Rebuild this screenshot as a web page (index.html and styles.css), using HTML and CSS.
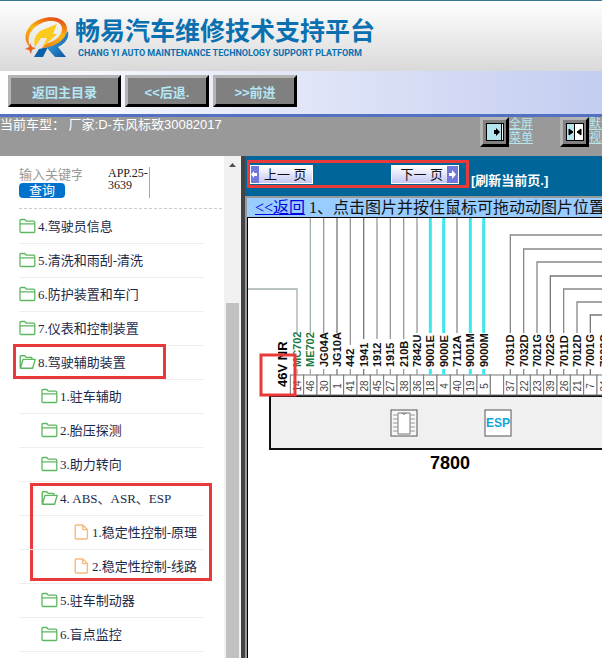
FILE: index.html
```html
<!DOCTYPE html>
<html lang="zh-CN">
<head>
  <meta charset="UTF-8">
  <meta name="viewport" content="width=device-width, initial-scale=1.0">
  <title>畅易汽车维修技术支持平台</title>
  <link rel="stylesheet" href="styles.css">
</head>
<body>
  <!-- icons used in the tree -->
  <svg class="sprites" width="0" height="0">
    <symbol id="folder" viewBox="0 0 17 16">
      <path d="M1 13.5V2.8Q1 1.5 2.3 1.5H5.8L7.2 3.2H14.5Q15.8 3.2 15.8 4.5V13.5Q15.8 14.5 14.8 14.5H2Q1 14.5 1 13.5ZM1 5.8H15.8" fill="none" stroke="#5cb860" stroke-width="1.3"/>
    </symbol>
    <symbol id="folder-open" viewBox="0 0 17 16">
      <path d="M1.2 13.8V2.8Q1.2 1.8 2.2 1.8H5.8L7.2 3.4H12.8V5.4M1.4 14.2L4 5.4H16.2L13.6 14.2Z" fill="none" stroke="#5cb860" stroke-width="1.4" stroke-linejoin="round"/>
    </symbol>
    <symbol id="file" viewBox="0 0 15 16">
      <path d="M1.2 2Q1.2 1 2.2 1H8.8L13.4 5.6V14Q13.4 15 12.4 15H2.2Q1.2 15 1.2 14ZM8.8 1V5.6H13.4" fill="none" stroke="#f5ba7c" stroke-width="1.4" stroke-linejoin="round"/>
    </symbol>
  </svg>

  <header class="banner">
    <svg class="logo" width="48" height="44" viewBox="0 0 48 44">
      <defs>
        <linearGradient id="flame" x1="0.7" y1="0" x2="0.3" y2="1">
          <stop offset="0" stop-color="#e44a12"/>
          <stop offset="0.45" stop-color="#fbb615"/>
          <stop offset="1" stop-color="#ef7a12"/>
        </linearGradient>
        <linearGradient id="leg" x1="0" y1="0" x2="1" y2="1">
          <stop offset="0" stop-color="#45b5e8"/>
          <stop offset="1" stop-color="#0b4f9e"/>
        </linearGradient>
      </defs>
      <path d="M16 33L25 31L20 41H11Z" fill="#0c5fa9"/>
      <path d="M25 30Q34 29 45 15Q47 25 35 31L43 41H32L24 32Z" fill="url(#leg)"/>
      <path d="M7 31C-2 23 3 8 18 3C32 -2 45 4 44 14C43 24 32 31 19 32L22 28C31 26 39 20 39 13C39 5 28 3 19 7C7 12 3 22 7 31Z" fill="url(#flame)"/>
      <path d="M17 15L34 8L30 18H34L19 32L24 22H18L12 31Q9 22 17 15Z" fill="#fcc91d"/>
      <path d="M7 27L9 31L13 32L9 34L8 38L6 34L2 33L6 31Z" fill="#e8641c"/>
    </svg>
    <div class="brand">
      <h1>畅易汽车维修技术支持平台</h1>
      <p>CHANG YI AUTO MAINTENANCE TECHNOLOGY SUPPORT PLATFORM</p>
    </div>
  </header>

  <nav class="toolbar">
    <button type="button" class="bevel wide">返回主目录</button>
    <button type="button" class="bevel">&lt;&lt;后退.</button>
    <button type="button" class="bevel">&gt;&gt;前进</button>
  </nav>

  <div class="status">
    <p class="model">当前车型： 厂家:D-东风标致30082017</p>
    <div class="view">
      <button type="button" class="bevel icon" aria-label="全屏菜单">
        <svg width="18" height="18" viewBox="0 0 18 18">
          <rect width="18" height="18" fill="#000"/>
          <rect x="1" y="1" width="14" height="16" fill="#b5e6ee"/>
          <rect x="16" y="1" width="1" height="16" fill="#fff"/>
          <path d="M8 7H10V5L14 9L10 13V11H8Z" fill="#000"/>
        </svg>
      </button>
      <a href="#">全屏<br>菜单</a>
    </div>
    <div class="view">
      <button type="button" class="bevel icon" aria-label="默认视图">
        <svg width="18" height="18" viewBox="0 0 18 18">
          <rect width="18" height="18" fill="#000"/>
          <rect x="1" y="1" width="7" height="16" fill="#b5e6ee"/>
          <rect x="9" y="1" width="8" height="16" fill="#fff"/>
          <path d="M3 6L7 9L3 12ZM15 6L11 9L15 12Z" fill="#000" stroke="#000"/>
        </svg>
      </button>
      <a href="#">默认<br>视图</a>
    </div>
  </div>

  <main class="main">
    <aside class="sidebar">
      <form class="search">
        <div class="fields">
          <input type="text" name="keyword" placeholder="输入关键字" aria-label="输入关键字">
          <button type="submit">查询</button>
        </div>
        <p class="code">APP.25-3639</p>
      </form>
      <ul class="tree">
        <li><a href="#"><svg><use href="#folder"/></svg>4.驾驶员信息</a></li>
        <li><a href="#"><svg><use href="#folder"/></svg>5.清洗和雨刮-清洗</a></li>
        <li><a href="#"><svg><use href="#folder"/></svg>6.防护装置和车门</a></li>
        <li><a href="#"><svg><use href="#folder"/></svg>7.仪表和控制装置</a></li>
        <li><a href="#"><svg><use href="#folder-open"/></svg>8.驾驶辅助装置</a>
          <span class="mark mark-row"></span>
          <ul class="level2">
            <li><a href="#"><svg><use href="#folder"/></svg>1.驻车辅助</a></li>
            <li><a href="#"><svg><use href="#folder"/></svg>2.胎压探测</a></li>
            <li><a href="#"><svg><use href="#folder"/></svg>3.助力转向</a></li>
            <li><a href="#"><svg><use href="#folder-open"/></svg>4. ABS、ASR、ESP</a>
              <span class="mark mark-group"></span>
              <ul class="level3">
                <li><a href="#"><svg><use href="#file"/></svg>1.稳定性控制-原理</a></li>
                <li><a href="#"><svg><use href="#file"/></svg>2.稳定性控制-线路</a></li>
              </ul>
            </li>
            <li><a href="#"><svg><use href="#folder"/></svg>5.驻车制动器</a></li>
            <li><a href="#"><svg><use href="#folder"/></svg>6.盲点监控</a></li>
          </ul>
        </li>
      </ul>
    </aside>
    <div class="scrollbar">
      <svg width="17" height="17" viewBox="0 0 17 17"><path d="M5 11L8.5 7L12 11Z" fill="#505050"/></svg>
      <div class="thumb"></div>
    </div>

    <section class="content">
      <div class="pages">
        <div class="pager">
          <button type="button" class="prev">
            <svg width="8" height="17" viewBox="0 0 8 17"><rect width="8" height="17" fill="#7078dc"/><path d="M0 8.5L3 5V7H6V10H3V12Z" fill="#fff"/></svg>
            <span>上一 页</span>
          </button>
          <button type="button" class="next">
            <span>下一 页</span>
            <svg width="11" height="17" viewBox="0 0 11 17"><rect width="11" height="17" fill="#7078dc"/><path d="M9 8.5L5 4V7H2V10H5V13Z" fill="#fff"/></svg>
          </button>
        </div>
        <a class="refresh" href="#">[刷新当前页.]</a>
      </div>
      <div class="viewer">
        <p class="hint"><a href="#">&lt;&lt;返回</a> 1、点击图片并按住鼠标可拖动动图片位置</p>
        <div class="canvas">
          <svg id="diagram" width="480" height="300" viewBox="0 0 480 300">
            <rect x="22" y="178" width="500" height="53" fill="#f0f0f0" stroke="#111" stroke-width="2"/>
            <g id="pins"></g>
            <text class="ground" transform="translate(39 169) rotate(-90)">46V NR</text>
            <g fill="none" stroke="#555">
              <rect x="143" y="192" width="26" height="26" fill="#f7f7f7"/>
              <path d="M150 195H162V216H150ZM154 195Q156 198 158 195" fill="#fff" stroke="#777"/>
              <path d="M145 197H150M145 201H150M145 205H150M145 209H150M145 213H150M162 197H167M162 201H167M162 205H167M162 209H167M162 213H167" stroke="#999"/>
              <rect x="237" y="192" width="26" height="26" fill="#fff"/>
            </g>
            <text class="esp" x="250" y="209">ESP</text>
            <text class="unit" x="202" y="251">7800</text>
            <rect x="13" y="137" width="34" height="40" fill="none" stroke="#e93a3a" stroke-width="3"/>
          </svg>
        </div>
      </div>
    </section>
  </main>

  <script src="script.js"></script>
</body>
</html>
```

FILE: styles.css
```css
* {
  box-sizing: border-box;
}
body {
  margin: 0;
  height: 100vh;
  overflow: hidden;
  display: flex;
  flex-direction: column;
  font-family: "Liberation Sans", "Noto Sans CJK SC", sans-serif;
  font-size: 13px;
  background-color: #fff;
}
h1, p, ul {
  margin: 0;
  padding: 0;
}
svg {
  flex: none;
  display: block;
}
button {
  font-family: inherit;
  cursor: pointer;
}
.sprites {
  position: absolute;
}

/* header */
.banner {
  flex: none;
  display: flex;
  gap: 4px;
  height: 71px;
  padding: 15px 23px 0;
  border-top: 1px solid #3c7795;
  background: linear-gradient(#fff, #d9d9d9);
}
.brand {
  color: #0a70b0;
  white-space: nowrap;
}
.brand h1 {
  font-size: 25px;
  line-height: 30px;
}
.brand p {
  padding-left: 3px;
  font-family: Roboto, "Liberation Sans", sans-serif;
  font-size: 9px;
  line-height: 14px;
  font-weight: bold;
}
.toolbar {
  flex: none;
  display: flex;
  gap: 4px;
  height: 46px;
  padding: 4px 8px;
  border-bottom: 3px solid #5470c0;
  background: linear-gradient(90deg, #fff, #c3cdf0);
}
.bevel {
  width: 84px;
  height: 32px;
  padding: 0;
  border: 3px solid;
  border-color: #b4b4b4 #000 #000 #b4b4b4;
  background-color: #808080;
  color: #b4e6f5;
  font-size: 13px;
  font-weight: bold;
}
.bevel.wide {
  width: 113px;
}
.bevel.icon {
  width: 29px;
  height: 30px;
  display: flex;
  align-items: center;
  justify-content: center;
}
.status {
  flex: none;
  display: flex;
  height: 39px;
  overflow: hidden;
  background-color: #999;
  color: #fff;
}
.model {
  flex: 0 0 480px;
  line-height: 16px;
}
.view {
  flex: 0 0 80px;
  display: flex;
}
.view a {
  color: #b5e6ee;
  font-size: 12px;
  line-height: 14px;
  white-space: nowrap;
}

/* left tree */
.main {
  flex: 1;
  min-height: 0;
  display: flex;
}
.sidebar {
  flex: 0 0 224px;
  padding-left: 19px;
  font-family: "Liberation Serif", "Noto Sans CJK SC", serif;
}
.search {
  display: flex;
  height: 53px;
  margin-right: 2px;
  padding-top: 11px;
  border-bottom: 1px dashed #ccc;
}
.fields {
  width: 89px;
}
.search input {
  display: block;
  width: 63px;
  height: 16px;
  padding: 0;
  border: 0;
  background: none;
  font-family: inherit;
  font-size: 13px;
}
.search input::placeholder {
  color: #999;
}
.search button {
  display: block;
  width: 46px;
  height: 15px;
  padding: 0;
  border: 0;
  border-radius: 4px;
  background-color: #0072cc;
  color: #fff;
  font-size: 13px;
  line-height: 15px;
}
.code {
  width: 42px;
  height: 31px;
  border-right: 1px solid #aaa;
  color: #222;
  font-size: 12px;
  line-height: 12px;
}
.tree {
  margin-right: 20px;
  padding-top: 1px;
}
.tree li {
  position: relative;
  list-style: none;
}
.tree a {
  display: flex;
  align-items: center;
  gap: 2px;
  height: 34px;
  padding-bottom: 2px;
  border-bottom: 1px solid #eee;
  color: #1c2a4a;
  text-decoration: none;
  white-space: nowrap;
}
.tree svg {
  width: 17px;
  height: 16px;
}
.level2 a {
  padding-left: 22px;
}
.level3 a {
  padding-left: 54px;
}
.mark {
  position: absolute;
  border: 3px solid #e93a3a;
}
.mark-row {
  top: -2px;
  left: -6px;
  width: 153px;
  height: 35px;
}
.mark-group {
  top: 1px;
  left: 11px;
  right: -8px;
  bottom: 3px;
}
.scrollbar {
  flex: 0 0 21px;
  display: flex;
  flex-direction: column;
  border-right: 4px solid #444;
  background-color: #f1f1f1;
}
.thumb {
  flex: 1;
  margin: 130px 2px 0;
  background-color: #c1c1c1;
}

/* right pane */
.content {
  flex: 1;
  min-width: 0;
  display: flex;
  flex-direction: column;
  background-color: #069;
}
.pages {
  flex: none;
  display: flex;
  gap: 2px;
  height: 40px;
  padding: 4px 2px;
}
.pager {
  flex: 0 0 222px;
  display: flex;
  align-items: center;
  justify-content: space-between;
  height: 28px;
  padding-right: 7px;
  border: 3px solid #e93a3a;
}
.pager button {
  display: flex;
  align-items: center;
  height: 19px;
  padding: 0;
  border: 1px solid #fff;
  background: linear-gradient(#fff, #c4c8f4);
  color: #111;
  font-size: 13px;
  line-height: 17px;
  white-space: nowrap;
}
.pager span {
  padding: 0 5px;
}
.pager .next span {
  padding: 0 4px 0 8px;
}
.refresh {
  padding-top: 12px;
  color: #fff;
  font-weight: bold;
  line-height: 18px;
  text-decoration: none;
  white-space: nowrap;
}
.viewer {
  flex: 1;
  min-height: 0;
  display: flex;
  flex-direction: column;
  border-top: 2px solid #999;
  border-left: 2px solid #999;
}
.hint {
  flex: none;
  height: 19px;
  overflow: hidden;
  padding-left: 8px;
  background-color: #9cf;
  color: #111;
  font-family: "Liberation Serif", "Noto Sans CJK SC", serif;
  font-size: 16px;
  line-height: 19px;
  white-space: nowrap;
}
.hint a {
  color: #0000e0;
}
.canvas {
  flex: 1;
  min-height: 0;
  overflow: hidden;
  border-top: 1px solid #000;
  border-left: 1px solid #000;
  background-color: #fff;
}

/* wiring diagram */
#diagram .wire {
  font-size: 11px;
  font-weight: bold;
}
#diagram .pin {
  fill: #444;
  font-size: 10px;
  text-anchor: middle;
}
#diagram .ground {
  font-size: 13px;
  font-weight: bold;
}
#diagram .esp {
  fill: #12a5dc;
  font-size: 12px;
  font-weight: bold;
  text-anchor: middle;
}
#diagram .unit {
  font-size: 18px;
  font-weight: bold;
  text-anchor: middle;
}
```

FILE: script.js
```js
// [wire, pin, colour, y where the wire turns off]
const wires = [
  ["MC702", "14", "#a3b0aa", 71, "left"],
  ["ME702", "46", "#a3b0aa"],
  ["JG04A", "30", "#999"],
  ["JG10A", "1", "#777"],
  ["442", "41", "#999"],
  ["1941", "28", "#777"],
  ["1912", "45", "#999"],
  ["1915", "27", "#999"],
  ["210B", "38", "#999"],
  ["7842U", "36", "#999"],
  ["9001E", "18", "#3fe6ee"],
  ["9000E", "4", "#3fe6ee"],
  ["7112A", "40", "#888"],
  ["9001M", "19", "#3fe6ee"],
  ["9000M", "5", "#3fe6ee"],
  null,
  ["7031D", "37", "#888", 17],
  ["7032D", "22", "#888", 31],
  ["7021G", "23", "#888", 44],
  ["7022G", "39", "#777", 58],
  ["7011D", "26", "#888", 71],
  ["7012D", "21", "#888", 84],
  ["7001G", "7", "#777", 97],
  ["7002G", "24", "#888", 111]
];

const step = 40 / 3;
let html = "";

wires.forEach(function (wire, i) {
  const x = 49 + i * step;
  html += `<rect x="${x - step / 2}" y="157" width="${step}" height="20" fill="#fff" stroke="#777"/>`;
  if (!wire) return;

  const [name, pin, color, turn, side] = wire;
  const top = 145 - name.length * 6;
  const width = color === "#3fe6ee" ? 3 : 1.3;
  const labelColor = i < 2 ? "#1c7a45" : "#111";
  let path = `M${x} 0V${top}`;
  if (turn) path = `M${side === "left" ? 0 : 480} ${turn}H${x}V${Math.max(top, turn)}`;

  html += `<path d="${path}M${x} 151V157" fill="none" stroke="${color}" stroke-width="${width}"/>`;
  html += `<text class="wire" fill="${labelColor}" transform="translate(${x + 4} 149) rotate(-90)">${name}</text>`;
  html += `<text class="pin" transform="translate(${x + 4} 168) rotate(-90)">${pin}</text>`;
});

document.getElementById("pins").innerHTML = html;
```
